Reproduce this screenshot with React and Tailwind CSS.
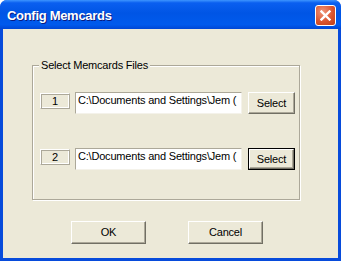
export default function App() {
    const rows = ["1", "2"];

    return (
        <div className="w-[341px] h-[261px] flex flex-col rounded-t-[7px] overflow-hidden bg-[#074BDB] font-['Liberation_Sans',Arial,sans-serif]">
            {/* title bar */}
            <div className="h-[29px] shrink-0 flex justify-between pl-[7px] pr-[5px] bg-[linear-gradient(to_bottom,#3D95FF_0%,#0A5FF0_10%,#0055E5_45%,#005AED_85%,#0046D5_100%)]">
                <span className="mt-[8px] text-[13px] leading-[15px] font-bold tracking-[-0.3px] text-white [text-shadow:1px_1px_0_#0A1A80]">
                    Config Memcards
                </span>
                <button className="mt-[5px] w-[21px] h-[21px] flex items-center justify-center rounded-[3px] border border-white bg-[radial-gradient(circle_at_35%_30%,#F0967A_0%,#DA5530_55%,#BE3D14_100%)]">
                    <svg width="11" height="11" viewBox="0 0 11 11">
                        <path d="M1.5 1.5 L9.5 9.5 M9.5 1.5 L1.5 9.5" stroke="#fff" strokeWidth="2.4" strokeLinecap="square" fill="none" />
                    </svg>
                </button>
            </div>

            {/* client area */}
            <div className="flex-1 mx-[3px] mb-[3px] bg-[#ECE9D8] flex flex-col text-[11px] leading-[13px] tracking-[-0.2px] text-black">
                <div className="relative mt-[36px] ml-[29px] w-[268px] h-[135px] border border-[#ACA899] shadow-[1px_1px_0_#fff,inset_1px_1px_0_#fff]">
                    <span className="absolute -top-[7px] left-[6px] px-[2px] bg-[#ECE9D8]">Select Memcards Files</span>

                    <div className="flex flex-col gap-[34px] pt-[26px] pl-[7px]">
                        {rows.map((n, i) => (
                            <div key={n} className="flex items-start">
                                <div className="mt-[1px] w-[30px] h-[16px] flex items-center justify-center border border-t-white border-l-white border-r-[#ACA899] border-b-[#ACA899] shadow-[inset_1px_1px_0_#ACA899,inset_-1px_-1px_0_#fff]">
                                    {n}
                                </div>
                                <div className="ml-[5px] w-[167px] h-[22px] bg-white border border-t-[#ACA899] border-l-[#ACA899] border-r-[#F4F2EA] border-b-[#F4F2EA] pl-[2px] pt-[1px] overflow-hidden whitespace-nowrap">
                                    C:\Documents and Settings\Jem (
                                </div>
                                {i === 1 ? (
                                    <div className="ml-[6px] w-[47px] h-[22px] border border-black">
                                        <div className="w-full h-full flex items-center justify-center bg-[#ECE9D8] border border-t-white border-l-white border-r-[#716F64] border-b-[#716F64] shadow-[inset_-1px_-1px_0_#ACA899]">
                                            Select
                                        </div>
                                    </div>
                                ) : (
                                    <div className="ml-[6px] w-[47px] h-[22px] flex items-center justify-center bg-[#ECE9D8] border border-t-white border-l-white border-r-[#716F64] border-b-[#716F64] shadow-[inset_-1px_-1px_0_#ACA899]">
                                        Select
                                    </div>
                                )}
                            </div>
                        ))}
                    </div>
                </div>

                <div className="flex mt-[21px] pl-[68px] gap-[42px]">
                    <div className="w-[75px] h-[23px] flex items-center justify-center border border-t-white border-l-white border-r-[#716F64] border-b-[#716F64] shadow-[inset_-1px_-1px_0_#ACA899]">
                        OK
                    </div>
                    <div className="w-[75px] h-[23px] flex items-center justify-center border border-t-white border-l-white border-r-[#716F64] border-b-[#716F64] shadow-[inset_-1px_-1px_0_#ACA899]">
                        Cancel
                    </div>
                </div>
            </div>
        </div>
    );
}
